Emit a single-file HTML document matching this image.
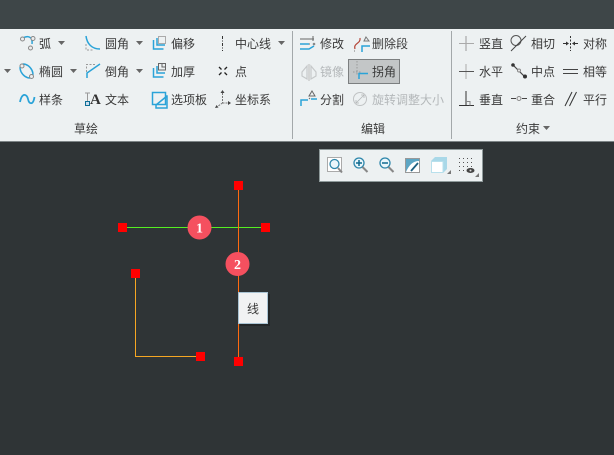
<!DOCTYPE html>
<html><head><meta charset="utf-8"><style>
html,body{margin:0;padding:0;background:#2f3436}
svg{display:block}
text{font-family:"Liberation Sans","Noto Sans CJK SC",sans-serif;font-size:12px;fill:#3a3a3a}
.g{fill:#b4b8ba}
.b{fill:none;stroke:#2aa3d8;stroke-width:1.5}
.k{fill:none;stroke:#555;stroke-width:1}
.l{fill:none;stroke:#aaa;stroke-width:1}
.d{fill:none;stroke:#333;stroke-width:1}
.a{fill:#666}
</style></head><body>
<svg width="614" height="455" viewBox="0 0 614 455" xmlns="http://www.w3.org/2000/svg">
<rect width="614" height="455" fill="#2f3436"/>
<rect width="614" height="29" fill="#3e4648"/>
<rect y="29" width="614" height="112" fill="#edf1f2"/>
<rect y="141" width="614" height="1" fill="#7d8486"/>
<rect x="292" y="31" width="1" height="108" fill="#a3a8aa"/>
<rect x="451" y="31" width="1" height="108" fill="#a3a8aa"/>
<rect x="348.500" y="59.500" width="51" height="24" fill="#c3c6c7" stroke="#7c7f80"/>

<!-- labels -->
<text x="39" y="48">弧</text><text x="105" y="48">圆角</text><text x="171" y="48">偏移</text><text x="235" y="48">中心线</text>
<text x="39" y="76">椭圆</text><text x="105" y="76">倒角</text><text x="171" y="76">加厚</text><text x="235" y="76">点</text>
<text x="39" y="104">样条</text><text x="105" y="104">文本</text><text x="171" y="104">选项板</text><text x="235" y="104">坐标系</text>
<text x="74" y="133">草绘</text>
<text x="320" y="48">修改</text><text x="372" y="48">删除段</text>
<text x="320" y="76" class="g">镜像</text><text x="372" y="76">拐角</text>
<text x="320" y="104">分割</text><text x="372" y="104" class="g">旋转调整大小</text>
<text x="361" y="133">编辑</text>
<text x="479" y="48">竖直</text><text x="531" y="48">相切</text><text x="583" y="48">对称</text>
<text x="479" y="76">水平</text><text x="531" y="76">中点</text><text x="583" y="76">相等</text>
<text x="479" y="104">垂直</text><text x="531" y="104">重合</text><text x="583" y="104">平行</text>
<text x="516" y="133">约束</text>

<!-- dropdown arrows -->
<path class="a" d="M58 41h7l-3.500 4zM136 41h7l-3.500 4zM278 41h7l-3.500 4zM4 69h7l-3.500 4zM70 69h7l-3.500 4zM136 69h7l-3.500 4zM543 126h7l-3.500 4z"/>

<!-- arc -->
<path d="M23 38C28 35 33 37 32 44" fill="none" stroke="#2aa3d8" stroke-width="1.500"/>
<circle cx="22.500" cy="39" r="2" fill="#eee" stroke="#888"/><circle cx="33" cy="38.500" r="2" fill="#eee" stroke="#888"/><circle cx="30.500" cy="48" r="2" fill="#eee" stroke="#888"/>
<!-- ellipse -->
<ellipse cx="26.500" cy="71" rx="5" ry="8" transform="rotate(-40 26.500 71)" class="b"/>
<circle cx="22" cy="66" r="2" fill="#eee" stroke="#888"/><circle cx="31.500" cy="76.500" r="2" fill="#eee" stroke="#888"/>
<!-- spline -->
<path d="M20 102C22 92 27 94 28 99S33 106 34.500 97" fill="none" stroke="#2aa3d8" stroke-width="1.800"/>
<!-- fillet -->
<path d="M86 36C87 44 92 49 100 49" class="b"/><path d="M86 44v6h8" fill="none" stroke="#999" stroke-dasharray="2 1.500"/>
<!-- chamfer -->
<path d="M87 78V73L100 64" class="b"/><path d="M86.500 72V64.500H96" fill="none" stroke="#999" stroke-dasharray="2 1.500"/>
<!-- text icon -->
<path d="M85 93h5M87.500 93v9" stroke="#999" fill="none"/>
<text x="90" y="104" style="font-family:'Liberation Serif',serif;font-size:15px;font-weight:bold;fill:#333">A</text>
<rect x="85.500" y="101.500" width="4" height="4" fill="#cde" stroke="#0d6f96"/>
<!-- offset -->
<path d="M153.500 40v9h10" class="b"/><path d="M157 38v7h8" class="b"/><rect x="158.500" y="36.500" width="7" height="7" fill="none" stroke="#aaa"/>
<!-- thicken -->
<path d="M153.500 68v9h10" class="b"/><path d="M157 66v7h8" class="b"/><path d="M158.500 70v-6.500h7v6.500z" fill="none" stroke="#666"/><path d="M162 64v3h3" fill="none" stroke="#666"/>
<!-- panel -->
<rect x="152.500" y="92.500" width="13" height="12" fill="none" stroke="#2aa3d8" stroke-width="1.500"/><path d="M156 105V108H167V96H165M156 105L167 96" class="b"/>
<!-- centerline -->
<path d="M222.500 36v15" stroke="#333" stroke-dasharray="3 1.500 1 1.500" fill="none"/>
<!-- point -->
<path d="M219 67l2.500 2.500M219 75l2.500-2.500M227 67l-2.500 2.500M227 75l-2.500-2.500" stroke="#222" fill="none" stroke-width="1.300"/>
<!-- csys -->
<path d="M222.500 93v10M222.500 103h6M222.500 103l-5 3.500" fill="none" stroke="#777" stroke-dasharray="2 1"/>
<path d="M222.500 90l-2 3h4zM231 103l-3-2v4zM215 108l3.500-.5-2-2.500z" fill="#444"/>

<!-- modify -->
<path d="M300 39h14M300 44h10M313 36v5" stroke="#666" fill="none"/><path d="M300 49h9l5-3" class="b"/><path d="M300 44h9" class="b"/><circle cx="314" cy="44" r="1.300" fill="#888"/>
<!-- delete seg -->
<path d="M355 49C353 43 361 44 360 38" fill="none" stroke="#b5483a" stroke-width="1.200"/><path d="M366 37l3 4h-5zM354 51h1" stroke="#777" fill="none"/><path d="M362 52v-6h8" class="b"/>
<!-- mirror -->
<path d="M302 72l5-6v13l-5-3zM316 72l-5-6v13l5-3z" fill="none" stroke="#c6c9ca" stroke-width="1.200"/><path d="M309 64v17" stroke="#bbb" fill="none"/>
<!-- corner -->
<path d="M357 61v15M353 72h8" fill="none" stroke="#999" stroke-dasharray="1.500 1.500"/><path d="M359 79v-5.500h9" class="b"/>
<!-- divide -->
<path d="M301 106v-6h7M311 99h6" class="b"/><path d="M312 91l3 5h-6zM309 98l1 1" stroke="#666" fill="none"/>
<!-- rotate resize -->
<circle cx="360" cy="99" r="6.500" fill="none" stroke="#c0c3c4" stroke-width="1"/><path d="M356.500 102.500l7-7M364 95h-3M364 95v3M356 103h3M356 103v-3" fill="none" stroke="#b5b8b9" stroke-width=".8"/>

<!-- vertical -->
<path d="M466 36v15" stroke="#999" fill="none"/><path d="M459 43.500h15" stroke="#aaa" fill="none"/>
<!-- tangent -->
<circle cx="516" cy="40.500" r="5" class="k"/><path d="M511 51L526 36" stroke="#444" fill="none"/>
<!-- symmetric -->
<path d="M570.500 36v15" stroke="#333" stroke-dasharray="2 1.500" fill="none"/><path d="M563 43.500h5M573 43.500h5" stroke="#333" fill="none"/><path d="M569 43.500l-3-2v4zM572 43.500l3-2v4z" fill="#333"/>
<!-- horizontal -->
<path d="M466 64v15" stroke="#aaa" fill="none"/><path d="M459 71.500h15" stroke="#555" fill="none"/>
<!-- midpoint -->
<path d="M512 64L525 77" stroke="#444" fill="none" stroke-width="1.200"/><circle cx="513" cy="65" r="1.800" fill="#333"/><circle cx="525" cy="76.500" r="2" fill="#333"/><circle cx="519" cy="70.500" r="1.500" fill="#eee" stroke="#888"/>
<!-- equal -->
<path d="M563 69.500h15M563 73.500h15" stroke="#444" fill="none"/>
<!-- perpendicular -->
<path d="M459 105.500h15M466 91v14.500" stroke="#333" fill="none"/><path d="M466 101.500h4v4" stroke="#888" fill="none"/>
<!-- coincident -->
<path d="M511 98.500h5M522 98.500h5" stroke="#444" fill="none"/><circle cx="519" cy="98.500" r="2" fill="#eee" stroke="#888"/>
<!-- parallel -->
<path d="M565 106L572 92M569.500 106L576.500 92" stroke="#333" fill="none"/>

<!-- mini toolbar -->
<rect x="319.500" y="149.500" width="163" height="32" fill="#edf1f2" stroke="#8f9a9b"/>
<rect x="327.500" y="157.500" width="14" height="14" fill="#fff" stroke="#aaa"/>
<circle cx="334.500" cy="164" r="4.500" fill="#eaf6fb" stroke="#2f87ab" stroke-width="1.300"/><path d="M338 168l4 4.500" stroke="#888" stroke-width="2" fill="none"/>
<circle cx="359" cy="163" r="5" fill="#eaf6fb" stroke="#2f87ab" stroke-width="1.300"/><path d="M362.500 167l5 5" stroke="#888" stroke-width="2" fill="none"/><path d="M356 163h6M359 160v6" stroke="#0f6a90" stroke-width="1.500" fill="none"/>
<circle cx="385" cy="163" r="5" fill="#eaf6fb" stroke="#2f87ab" stroke-width="1.300"/><path d="M388.500 167l5 5" stroke="#888" stroke-width="2" fill="none"/><path d="M382 163h6" stroke="#0f6a90" stroke-width="1.500" fill="none"/>
<rect x="405.500" y="158.500" width="14" height="14" fill="#fff" stroke="#999"/><path d="M406 159h13v2C413 161 409 165 406 172z" fill="#5da6c4"/><path d="M411 171l7-8" stroke="#1d5f80" stroke-width="1.800" fill="none"/>
<path d="M431 161l4-4h12v12l-4 4h-12z" fill="#a9d8e8"/><rect x="431.500" y="161.500" width="11.500" height="11" fill="#fff" stroke="#b8e0ec"/>
<path d="M447 174h4v-4z" fill="#777"/>
<g fill="#555"><rect x="459" y="158" width="1" height="1"/><rect x="463" y="158" width="1" height="1"/><rect x="467" y="158" width="1" height="1"/><rect x="471" y="158" width="1" height="1"/><rect x="459" y="162" width="1" height="1"/><rect x="463" y="162" width="1" height="1"/><rect x="467" y="162" width="1" height="1"/><rect x="471" y="162" width="1" height="1"/><rect x="459" y="166" width="1" height="1"/><rect x="463" y="166" width="1" height="1"/><rect x="467" y="166" width="1" height="1"/><rect x="471" y="166" width="1" height="1"/><rect x="459" y="170" width="1" height="1"/><rect x="463" y="170" width="1" height="1"/></g>
<ellipse cx="470.500" cy="170.500" rx="4" ry="2.500" fill="#444"/><circle cx="470.500" cy="170.500" r="1" fill="#ddd"/>
<path d="M475 177h4v-4z" fill="#777"/>

<!-- sketch -->
<path d="M123 227.500H265" stroke="#55ee22" stroke-width="1"/>
<path d="M238.500 185V361" stroke="#ff6a10" stroke-width="1"/>
<path d="M135.500 273V356.500H200" fill="none" stroke="#f5a623" stroke-width="1"/>
<g fill="#ff0000">
<rect x="118" y="223" width="9" height="9"/><rect x="261" y="223" width="9" height="9"/>
<rect x="234" y="181" width="9" height="9"/><rect x="234" y="357" width="9" height="9"/>
<rect x="131" y="269" width="9" height="9"/><rect x="196" y="352" width="9" height="9"/>
</g>
<circle cx="199.500" cy="227.500" r="12" fill="#f5505f"/>
<text x="199.500" y="232.500" text-anchor="middle" style="font-family:'Liberation Serif',serif;font-size:14px;font-weight:bold;fill:#fff">1</text>
<circle cx="237.500" cy="264" r="12" fill="#f5505f"/>
<text x="237.500" y="269" text-anchor="middle" style="font-family:'Liberation Serif',serif;font-size:14px;font-weight:bold;fill:#fff">2</text>
<rect x="240" y="294" width="30" height="32" fill="#1d2021" opacity=".6"/>
<rect x="238.500" y="292.500" width="29" height="31" fill="#f1f2f3" stroke="#a9c3d3"/>
<text x="247" y="313">线</text>
</svg>
</body></html>
